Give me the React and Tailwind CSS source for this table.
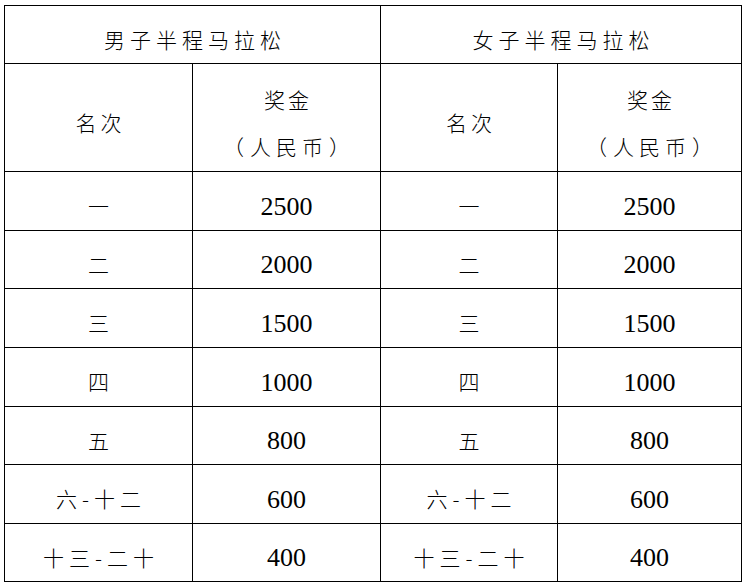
const rows = [
  ['一', '2500'],
  ['二', '2000'],
  ['三', '1500'],
  ['四', '1000'],
  ['五', '800'],
  ['六-十二', '600'],
  ['十三-二十', '400'],
]

const heights = ['h-[59px]', 'h-[58px]', 'h-[59px]', 'h-[59px]', 'h-[58px]', 'h-[59px]', 'h-[58px]']

function Cell({ children, className = '' }) {
  return (
    <div
      className={`flex items-center justify-center border-r border-b border-black pt-[10px] text-black ${className}`}
    >
      {children}
    </div>
  )
}

const cjk = "font-['Noto_Sans_CJK_SC',sans-serif] text-[21px] font-light"
const num = "font-['Liberation_Serif','Times_New_Roman',serif] text-[26px]"

export default function App() {
  return (
    <div className="min-h-screen bg-white pt-[5px] pl-[4px]">
      <div className="grid w-[738px] grid-cols-[188px_188px_177px_184px] border-l border-t border-black">
        <Cell className={`col-span-2 h-[58px] pl-[5px] tracking-[5px] ${cjk}`}>男子半程马拉松</Cell>
        <Cell className={`col-span-2 h-[58px] pl-[5px] tracking-[5px] ${cjk}`}>女子半程马拉松</Cell>
        {[0, 1].map((k) => (
          <div key={k} className="contents">
            <Cell className={`h-[108px] pl-[4px] tracking-[4px] ${cjk}`}>名次</Cell>
            <Cell className={`h-[108px] flex-col leading-[47px] ${cjk}`}>
              <span className="pl-[3px] tracking-[3px]">奖金</span>
              <span className="flex">
                <span className="mr-[6px] inline-block w-[21px]">（</span>
                <span className="tracking-[5px]">人民币</span>
                <span className="ml-[1px] inline-block w-[21px]">）</span>
              </span>
            </Cell>
          </div>
        ))}
        {rows.map(([rank, prize], i) => (
          <div key={rank} className="contents">
            {[0, 1].map((k) => (
              <div key={k} className="contents">
                <Cell className={`${heights[i]} pl-[5px] tracking-[5px] ${cjk}`}>{rank}</Cell>
                <Cell className={`${heights[i]} ${num}`}>{prize}</Cell>
              </div>
            ))}
          </div>
        ))}
      </div>
    </div>
  )
}
